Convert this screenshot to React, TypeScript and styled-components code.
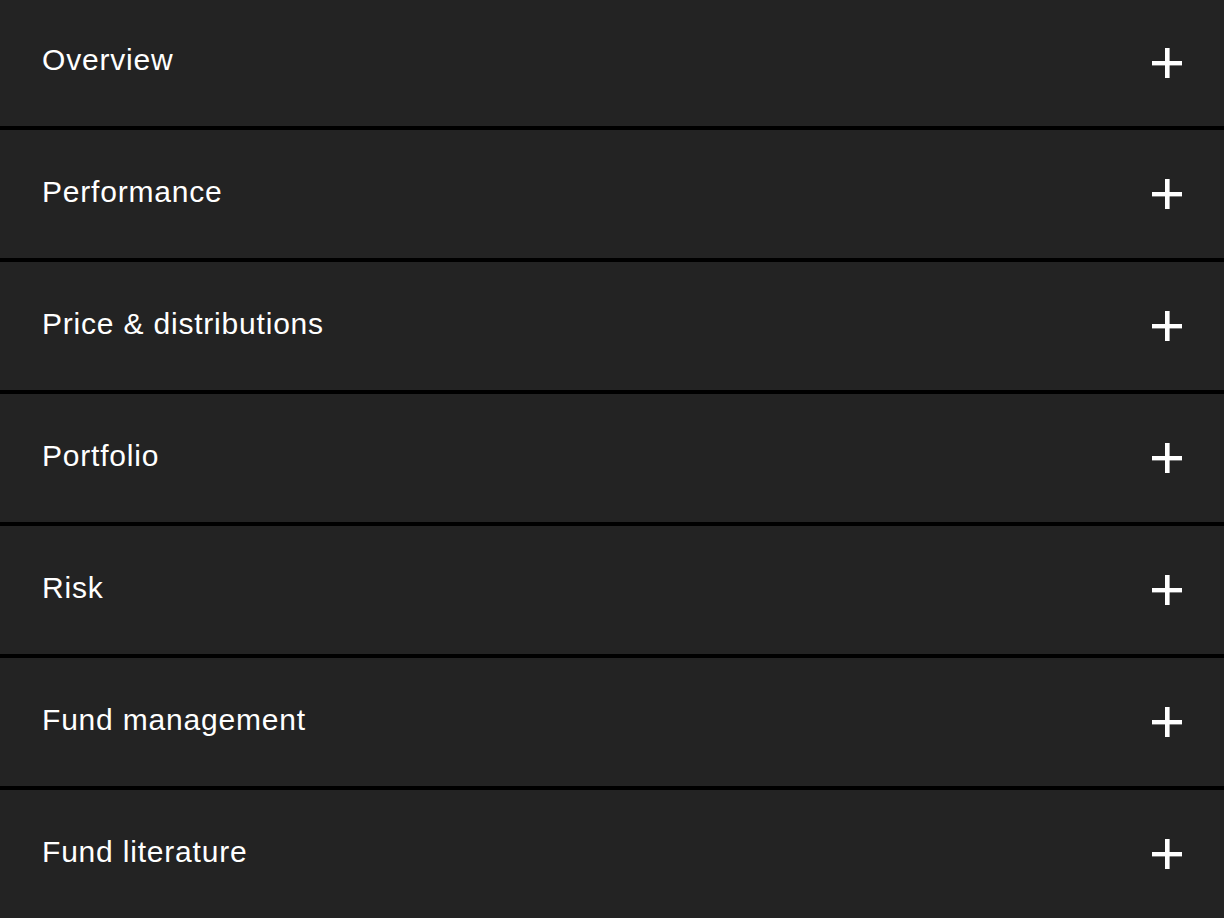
import React from 'react';
import styled, { createGlobalStyle } from 'styled-components';

const GlobalStyle = createGlobalStyle`
  html, body {
    margin: 0;
    padding: 0;
    background: #000;
  }
  body {
    font-family: 'Liberation Sans', Arial, sans-serif;
    -webkit-font-smoothing: antialiased;
  }
`;

const List = styled.div`
  display: flex;
  flex-direction: column;
  gap: 4px;
  width: 1224px;
  height: 918px;
  overflow: hidden;
  background: #000;
`;

const Row = styled.button<{ first?: boolean }>`
  display: flex;
  align-items: center;
  justify-content: space-between;
  flex-shrink: 0;
  height: ${({ first }) => (first ? 126 : 128)}px;
  padding: 0 42px 0 42px;
  box-sizing: border-box;
  border: none;
  background: #232323;
  color: #fff;
  cursor: pointer;
  text-align: left;
  font-family: inherit;
`;

const Label = styled.span<{ first?: boolean }>`
  font-size: 30px;
  line-height: 36px;
  letter-spacing: 0.8px;
  margin-bottom: ${({ first }) => (first ? 6 : 4)}px;
`;

const PlusIcon = () => (
  <svg width="30" height="30" viewBox="0 0 30 30" aria-hidden>
    <rect x="13" y="0" width="4.6" height="30" fill="#fff" />
    <rect x="0" y="13" width="30" height="4.4" fill="#fff" />
  </svg>
);

const sections = [
  'Overview',
  'Performance',
  'Price & distributions',
  'Portfolio',
  'Risk',
  'Fund management',
  'Fund literature',
];

const App = () => (
  <>
    <GlobalStyle />
    <List>
      {sections.map((title, i) => (
        <Row key={title} first={i === 0}>
          <Label first={i === 0}>{title}</Label>
          <PlusIcon />
        </Row>
      ))}
    </List>
  </>
);

export default App;
